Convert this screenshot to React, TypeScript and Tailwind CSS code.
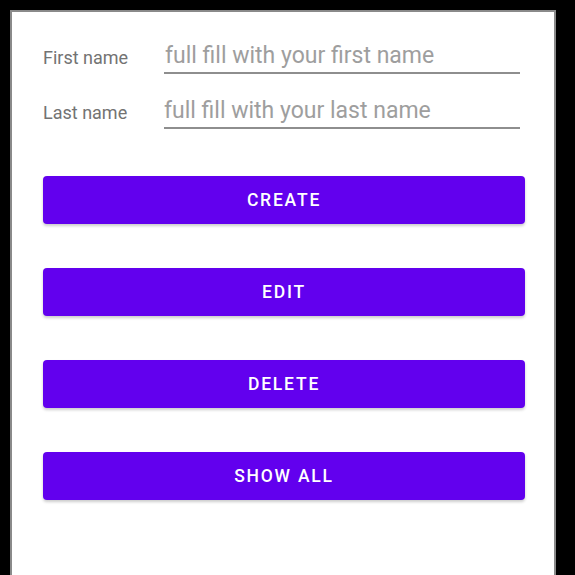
const buttons = ["CREATE", "EDIT", "DELETE", "SHOW ALL"]

export default function App() {
    return (
        <div className="h-[575px] w-[575px] overflow-hidden bg-black pl-[10px] pt-[10px] font-['Roboto',sans-serif]">
            <div className="h-[600px] w-[546px] border-2 border-[#8a8a8a] bg-white pl-[31px] pt-[24px]">
                <div className="flex flex-col gap-[17px]">
                    <div className="flex items-end">
                        <label className="w-[121px] pb-[3px] text-[18px] text-[#737373]">First name</label>
                        <input
                            placeholder="full fill with your first name"
                            className="h-[38px] w-[356px] border-b-2 border-[#8e8e8e] bg-transparent pt-[2px] pb-0 pl-px text-[23px] text-[#333] outline-none placeholder:text-[#9e9e9e]"
                        />
                    </div>
                    <div className="flex items-end">
                        <label className="w-[121px] pb-[3px] text-[18px] text-[#737373]">Last name</label>
                        <input
                            placeholder="full fill with your last name"
                            className="h-[38px] w-[356px] border-b-2 border-[#8e8e8e] bg-transparent pt-[2px] pb-0 text-[23px] text-[#333] outline-none placeholder:text-[#9e9e9e]"
                        />
                    </div>
                </div>
                <div className="mt-[47px] flex w-[482px] flex-col gap-[44px]">
                    {buttons.map((b) => (
                        <button
                            key={b}
                            className="h-[48px] w-full rounded-[4px] bg-[#6200ee] text-[17.5px] font-medium tracking-[1.8px] text-white shadow-[0_2px_3px_rgba(0,0,0,0.2)]"
                        >
                            {b}
                        </button>
                    ))}
                </div>
            </div>
        </div>
    )
}
